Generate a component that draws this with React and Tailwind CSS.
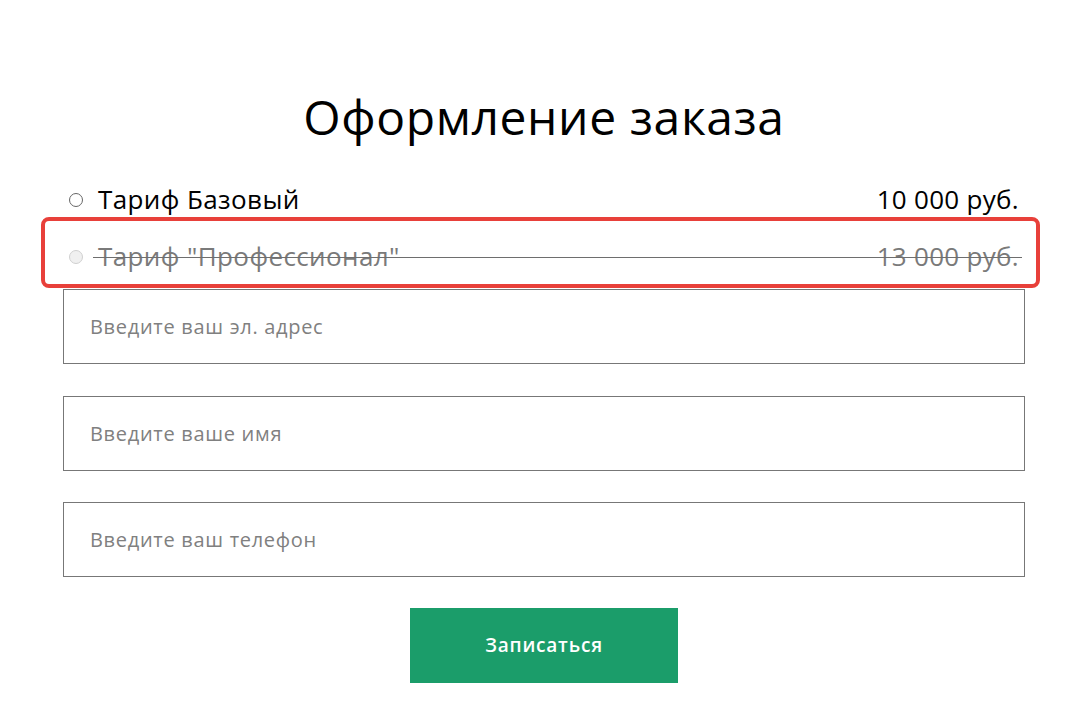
import React from "react";

function Radio({ disabled }) {
  return (
    <span
      className={
        disabled
          ? "w-[14px] h-[14px] rounded-full border border-[#d0d0d0] bg-[#f0f0f0] shrink-0"
          : "w-[14px] h-[14px] rounded-full border-[1.5px] border-[#666] bg-white shrink-0"
      }
    />
  );
}

function Field({ placeholder, className = "" }) {
  return (
    <input
      type="text"
      placeholder={placeholder}
      className={
        "block w-full h-[75px] border border-[#777] px-[26px] text-[20px] tracking-[0.7px] text-black placeholder-[#808080] outline-none " +
        className
      }
    />
  );
}

export default function App() {
  return (
    <div
      className="relative min-h-screen bg-white"
      style={{ fontFamily: '"Open Sans", "Noto Sans", sans-serif' }}
    >
      <div className="ml-[63px] w-[962px] pt-[87px]">
        {/* Title */}
        <h1 className="text-center text-[48px] tracking-[0.6px] leading-[60px] font-normal text-black mb-[24px]">
          Оформление заказа
        </h1>

        {/* Tariffs */}
        <div className="flex items-center h-[57px] px-[6px]">
          <Radio />
          <span className="ml-[15px] text-[26px] tracking-[0.4px] text-black">Тариф Базовый</span>
          <span className="ml-auto text-[26px] tracking-[0.3px] text-black">10 000 руб.</span>
        </div>
        <div className="relative flex items-center h-[57px] px-[6px]">
          <Radio disabled />
          <span className="ml-[15px] text-[26px] tracking-[0.4px] text-[#7a7a7a]">Тариф "Профессионал"</span>
          <span className="ml-auto text-[26px] tracking-[0.3px] text-[#7a7a7a]">13 000 руб.</span>
          <div className="absolute left-[30px] right-[3px] top-[29px] h-px bg-[#6e6e6e]" />
        </div>

        {/* Form */}
        <div className="mt-[4px]">
          <Field placeholder="Введите ваш эл. адрес" />
          <Field placeholder="Введите ваше имя" className="mt-[32px]" />
          <Field placeholder="Введите ваш телефон" className="mt-[31px]" />
        </div>

        <div className="flex justify-center mt-[31px]">
          <button className="w-[268px] h-[75px] bg-[#1b9d6a] text-white text-[19px] tracking-[0.8px] font-semibold">
            Записаться
          </button>
        </div>
      </div>

      {/* highlight frame */}
      <div className="absolute left-[41px] top-[217px] w-[999px] h-[71px] border-4 border-[#e8403a] rounded-lg pointer-events-none" />
    </div>
  );
}
